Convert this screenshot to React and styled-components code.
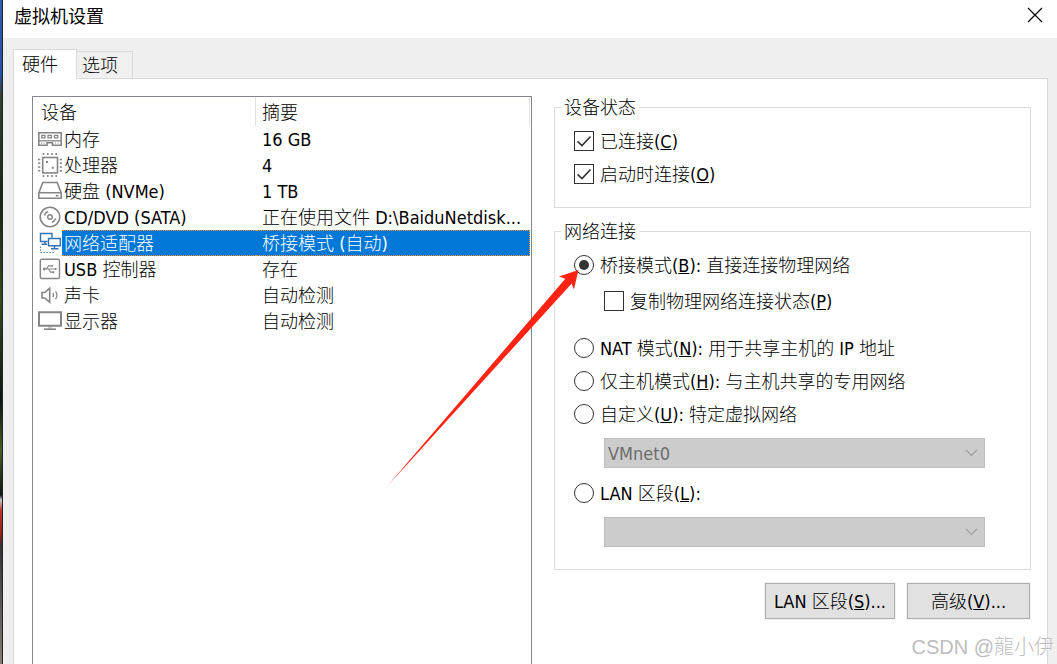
import React, { useState } from 'react';
import styled, { createGlobalStyle, css } from 'styled-components';


const GlobalStyle = createGlobalStyle`
    * { box-sizing: border-box; }
    body { margin: 0; background: #fff; }
    body, button, input, select {
        font-family: 'DejaVu Sans Condensed', 'Noto Sans', 'Noto Sans CJK SC', sans-serif;
        font-size: 18px;
        color: #000;
    }
`

const Screen = styled.div`
    position: relative;
    display: flex;
    height: 100vh;
    overflow: hidden;
`

const Desktop = styled.div`
    flex: 0 0 3px;
    border-right: 1px solid #1b2430;
    background: linear-gradient(#2f5fae 0, #2450a0 75px, #33422a 95px, #1d2412 200px, #3a4a1a 300px, #10140c 400px,
        #4a5c20 450px, #14160f 495px, #c9c9c9 500px, #c23535 510px, #8e2015 535px, #33302e 545px, #8a7b72 664px);
`

const Dialog = styled.div`
    flex: 1;
    min-width: 0;
    display: flex;
    flex-direction: column;
    background: #efefef;
`

const TitleBar = styled.header`
    display: flex;
    justify-content: space-between;
    align-items: center;
    height: 38px;
    padding: 0 13px 8px 11px;
    background: #fff;
`

const Title = styled.h1`
    margin: 0;
    font-family: 'Noto Sans CJK SC', sans-serif;
    font-size: 18px;
    line-height: 30px;
    font-weight: 400;
`

const CloseButton = styled.button`
    display: flex;
    padding: 0;
    border: 0;
    background: none;
`

const Body = styled.div`
    flex: 1;
    min-height: 0;
    display: flex;
    flex-direction: column;
    padding: 11px 9px 0 10px;
`

const TabList = styled.div`
    display: flex;
    align-items: flex-end;
    margin-bottom: -1px;
`

const Tab = styled.button`
    height: 28px;
    padding: 1px 14px 0 5px;
    border: 1px solid #d9d9d9;
    border-left: 0;
    background: #f0f0f0;
    font-weight: 300;
    line-height: 26px;
    ${p => p.$active && css`
        z-index: 1;
        height: 30px;
        padding: 0 18px 0 8px;
        border-left: 1px solid #d9d9d9;
        border-bottom: 0;
        background: #fff;
    `}
`

const Panel = styled.main`
    flex: 1;
    min-height: 0;
    display: grid;
    grid-template-columns: 500fr 477fr;
    column-gap: 22px;
    padding: 17px 16px 0 18px;
    border: 1px solid #d9d9d9;
    border-bottom: 0;
    background: #fff;
    font-weight: 300;
`

const DeviceBox = styled.div`
    min-width: 0;
    border: 1px solid #828790;
    border-bottom: 0;
    padding-right: 1px;
`

const DeviceTable = styled.table`
    width: 100%;
    table-layout: fixed;
    border-collapse: separate;
    border-spacing: 0;
`

const HeadCell = styled.th`
    height: 29px;
    padding: 3px 0 0 ${p => p.$indent}px;
    border-right: 1px solid #e2e2e2;
    text-align: left;
    font-weight: 300;
    line-height: 26px;
`

const IconCell = styled.td`
    height: 26px;
    padding: 1px 0 1px 5px;
    svg { display: block; }
`

const Cell = styled.td`
    height: 26px;
    padding: 2px 0 0 ${p => p.$indent}px;
    border: 0 dotted #ff9226;
    line-height: 22px;
    white-space: nowrap;
    overflow: hidden;
    ${p => p.$selected && css`
        background: #0078d7;
        color: #fff;
        border-width: 1px 0;
        &:last-child { border-right-width: 1px; }
    `}
`

const Settings = styled.div`
    min-width: 0;
`

const Group = styled.fieldset`
    min-width: 0;
    margin: 0 0 12px;
    padding: 5px 0 17px;
    border: 1px solid #dcdcdc;
`

const Legend = styled.legend`
    margin-left: 6px;
    padding: 0 3px;
    line-height: 23px;
`

const Option = styled.div`
    position: relative;
    display: flex;
    align-items: center;
    gap: 6px;
    height: 33px;
    padding-left: 19px;
    white-space: nowrap;
    label { padding-bottom: 2px; }
    ${p => p.$nested && css`
        margin: 3px 0 14px;
        padding-left: 49px;
    `}
`

const Mark = styled.span`
    display: grid;
    flex: none;
    width: 20px;
    height: 20px;
    > * { grid-area: 1 / 1; }
    svg { pointer-events: none; visibility: hidden; }
    input:checked + svg { visibility: visible; }
`

const Toggle = styled.input`
    appearance: none;
    width: 20px;
    height: 20px;
    margin: 0;
    border: 1px solid #333;
    border-radius: ${p => p.type === 'radio' ? '50%' : '0'};
    background: #fff;
`

const SelectWrap = styled.div`
    display: grid;
    align-items: center;
    margin: 8px 45px 8px 49px;
    > * { grid-area: 1 / 1; }
    svg { justify-self: end; margin-right: 7px; pointer-events: none; }
    &:last-child { margin-bottom: 5px; }
`

const Select = styled.select`
    appearance: none;
    width: 100%;
    height: 30px;
    padding: 0 3px;
    border: 1px solid #bfbfbf;
    border-radius: 0;
    background: #ccc;
    color: #6d6d6d;
    opacity: 1;
`

const Buttons = styled.div`
    display: flex;
    justify-content: flex-end;
    gap: 12px;
    padding: 1px 1px 0 0;
`

const Button = styled.button`
    min-width: 123px;
    height: 36px;
    padding: 0 8px 2px;
    border: 1px solid #adadad;
    background: #e1e1e1;
    box-shadow: 0 0 0 1px #f4f4f4;
    font-weight: 300;
    white-space: nowrap;
`

const Pointer = styled.svg`
    position: absolute;
    right: calc(100% - 24px);
    top: 21px;
    pointer-events: none;
`

const Watermark = styled.div`
    position: absolute;
    right: 3px;
    bottom: 4px;
    font-family: 'Liberation Sans', 'Noto Sans CJK TC', sans-serif;
    font-size: 20px;
    font-weight: 300;
    line-height: 26px;
    color: #bdbdbd;
    text-shadow: 1px 1px 0 #fff;
`


const Icon = ({ color = '#868686', children }) => (
    <svg width="24" height="24" viewBox="0 0 24 24" fill="none" stroke={color} strokeWidth="1.6" aria-hidden="true">
        {children}
    </svg>
)

const icons = {
    memory: (
        <Icon>
            <path d="M.8 5.800h22.400v12.400H14.500v-2.400H9v2.400H.8z" />
            <path d="M1 13.800h22" strokeWidth="1.300" />
            <path d="M3.800 8.300h3.200v2.500H3.800zM10 8.300h3.400v2.500H10zM16.400 8.300h3.400v2.500h-3.400z" strokeWidth="1.300" />
            <path d="M3.500 15v2M6 15v2M17.500 15v2M20 15v2" strokeWidth="1" opacity=".5" />
        </Icon>
    ),
    cpu: (
        <Icon>
            <rect x="4.700" y="4.500" width="14.800" height="15.400" />
            <path d="M5.500 0v2M9.800 0v2M14 0v2M18.200 0v2M5.500 22v2M9.800 22v2M14 22v2M18.200 22v2M0 6.500h2.300M0 10.200h2.300M0 14h2.300M0 17.800h2.300M21.700 6.500H24M21.700 10.200H24M21.700 14H24M21.700 17.800H24" />
            <path d="M8 8h2v2H8zM13.800 13.800h2v2h-2z" fill="#868686" stroke="none" />
        </Icon>
    ),
    disk: (
        <Icon>
            <path d="M4.800 3.500h14.400L23.200 14v5.200H.8V14zM.8 13.800h22.400" />
            <path d="M17.800 16.700h2.700" />
        </Icon>
    ),
    cd: (
        <Icon>
            <circle cx="12" cy="12" r="9.800" />
            <circle cx="12" cy="12" r="2.300" strokeWidth="1.400" />
            <path d="M6.500 10.500a5.800 5.800 0 0 1 3.500-4M17.500 13.500a5.800 5.800 0 0 1-3.500 4" strokeWidth="1.400" />
        </Icon>
    ),
    network: (
        <Icon color="#2f72b5">
            <path d="M9.500 10.500H2.500V2.500h11.500v4M10.500 7.500h11.800v7.300H10.500zM16.500 15v2.500M13 17.700h7.500M7 10.500v2.800M3.500 13.300H9" strokeWidth="1.400" />
            <path d="M2.500 15.500v6H17" strokeWidth="1.200" strokeDasharray="1.300 1.700" />
        </Icon>
    ),
    usb: (
        <Icon>
            <rect x="2.300" y="2.300" width="19.200" height="19.200" rx="1.500" strokeWidth="1.400" />
            <path d="M6 12h12M8.500 12l2-3.200h3M10.500 12l2 3.200h2.500" strokeWidth="1.200" />
            <circle cx="6.300" cy="12" r="1.400" fill="#868686" stroke="none" />
            <path d="M17 10.500l2.300 1.500-2.300 1.500zM13.300 7.900h1.900v1.900h-1.900zM14.500 14.300h1.900v1.900h-1.900z" fill="#868686" stroke="none" />
        </Icon>
    ),
    sound: (
        <Icon>
            <path d="M4 9.500h2.700l5-4.200v13.900l-5-4.200H4z" />
            <path d="M14.800 10.200q1.600 2 0 4M17.500 8.300q3 3.900 0 7.800" strokeWidth="1.300" />
        </Icon>
    ),
    monitor: (
        <Icon>
            <path d="M1 3.200h22v13.600H1z" strokeWidth="2" />
            <path d="M12 17v3" strokeWidth="4" opacity=".35" />
            <path d="M6 20.200h12" />
        </Icon>
    ),
}

const devices = [
    { icon: 'memory', name: '内存', summary: '16 GB' },
    { icon: 'cpu', name: '处理器', summary: '4' },
    { icon: 'disk', name: '硬盘 (NVMe)', summary: '1 TB' },
    { icon: 'cd', name: 'CD/DVD (SATA)', summary: '正在使用文件 D:\\BaiduNetdisk...' },
    { icon: 'network', name: '网络适配器', summary: '桥接模式 (自动)' },
    { icon: 'usb', name: 'USB 控制器', summary: '存在' },
    { icon: 'sound', name: '声卡', summary: '自动检测' },
    { icon: 'monitor', name: '显示器', summary: '自动检测' },
]


const CheckOption = ({ id, nested, checked, children }) => (
    <Option $nested={nested}>
        <Mark>
            <Toggle type="checkbox" id={id} defaultChecked={checked} />
            <svg width="20" height="20" viewBox="0 0 20 20" fill="none" stroke="#333" strokeWidth="1.6">
                <path d="M3.500 10.300l4.500 4.200 8.500-9" />
            </svg>
        </Mark>
        <label htmlFor={id}>{children}</label>
    </Option>
)

const RadioOption = ({ id, checked, label, extra }) => (
    <Option>
        <Mark>
            <Toggle type="radio" name="connection" id={id} defaultChecked={checked} />
            <svg width="20" height="20" viewBox="0 0 20 20">
                <circle cx="10" cy="10" r="5" fill="#333" />
            </svg>
        </Mark>
        <label htmlFor={id}>{label}</label>
        {extra}
    </Option>
)

const DropDown = ({ label, value }) => (
    <SelectWrap>
        <Select disabled aria-label={label} defaultValue={value}>
            <option value={value}>{value}</option>
        </Select>
        <svg width="13" height="8" viewBox="0 0 13 8" fill="none" stroke="#a0a0a0" strokeWidth="1.2">
            <path d="M1 1l5.500 5.500L12 1" />
        </svg>
    </SelectWrap>
)

const Arrow = () => (
    <Pointer width="197" height="224" viewBox="0 0 197 224" aria-hidden="true">
        <defs>
            <linearGradient id="tail" gradientUnits="userSpaceOnUse" x1="0" y1="222" x2="24" y2="195">
                <stop offset="0" stopColor="#ff2314" stopOpacity=".2" />
                <stop offset="1" stopColor="#ff2314" />
            </linearGradient>
        </defs>
        <path d="M196.500 1l-4.600 19.500-2.200-6L1 222 183.300 9.800l-6.400-2.400z" fill="url(#tail)" />
    </Pointer>
)


function App() {
    const [selected, setSelected] = useState('network')

    return (
        <Screen>
            <GlobalStyle />
            <Desktop />
            <Dialog role="dialog" aria-labelledby="title">
                <TitleBar>
                    <Title id="title">虚拟机设置</Title>
                    <CloseButton aria-label="关闭">
                        <svg width="18" height="18" viewBox="0 0 18 18" stroke="#000" strokeWidth="1.2">
                            <path d="M2 2l14 14M16 2L2 16" />
                        </svg>
                    </CloseButton>
                </TitleBar>

                <Body>
                    <TabList role="tablist">
                        <Tab role="tab" aria-selected="true" $active>硬件</Tab>
                        <Tab role="tab" aria-selected="false">选项</Tab>
                    </TabList>

                    <Panel>
                        <DeviceBox>
                            <DeviceTable>
                                <colgroup>
                                    <col style={{ width: 29 }} />
                                    <col style={{ width: 194 }} />
                                    <col />
                                </colgroup>
                                <thead>
                                    <tr>
                                        <HeadCell colSpan={2} $indent={8}>设备</HeadCell>
                                        <HeadCell $indent={6}>摘要</HeadCell>
                                    </tr>
                                </thead>
                                <tbody>
                                    {devices.map(d => (
                                        <tr key={d.icon} onClick={() => setSelected(d.icon)}>
                                            <IconCell>{icons[d.icon]}</IconCell>
                                            <Cell $indent={2} $selected={d.icon === selected}>{d.name}</Cell>
                                            <Cell $indent={6} $selected={d.icon === selected}>{d.summary}</Cell>
                                        </tr>
                                    ))}
                                </tbody>
                            </DeviceTable>
                        </DeviceBox>

                        <Settings>
                            <Group>
                                <Legend>设备状态</Legend>
                                <CheckOption id="connected" checked>已连接(<u>C</u>)</CheckOption>
                                <CheckOption id="power-on" checked>启动时连接(<u>O</u>)</CheckOption>
                            </Group>

                            <Group>
                                <Legend>网络连接</Legend>
                                <RadioOption id="bridged" checked label={<>桥接模式(<u>B</u>): 直接连接物理网络</>} extra={<Arrow />} />
                                <CheckOption id="replicate" nested>复制物理网络连接状态(<u>P</u>)</CheckOption>
                                <RadioOption id="nat" label={<>NAT 模式(<u>N</u>): 用于共享主机的 IP 地址</>} />
                                <RadioOption id="host-only" label={<>仅主机模式(<u>H</u>): 与主机共享的专用网络</>} />
                                <RadioOption id="custom" label={<>自定义(<u>U</u>): 特定虚拟网络</>} />
                                <DropDown label="特定虚拟网络" value="VMnet0" />
                                <RadioOption id="lan" label={<>LAN 区段(<u>L</u>):</>} />
                                <DropDown label="LAN 区段" value="" />
                            </Group>

                            <Buttons>
                                <Button>LAN 区段(<u>S</u>)...</Button>
                                <Button>高级(<u>V</u>)...</Button>
                            </Buttons>
                        </Settings>
                    </Panel>
                </Body>
            </Dialog>
            <Watermark>CSDN @龍小伊</Watermark>
        </Screen>
    );
}

export default App;
